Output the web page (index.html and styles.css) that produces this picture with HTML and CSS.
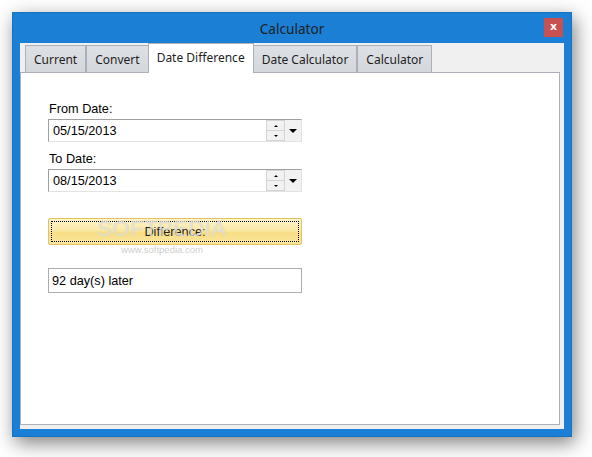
FILE: index.html
```html
<!DOCTYPE html>
<html>
<head>
<meta charset="utf-8">
<title>Calculator</title>
<link rel="stylesheet" href="styles.css">
</head>
<body>
<div class="window">
  <div class="titlebar">
    <span class="title">Calculator</span>
    <button class="close" type="button">x</button>
  </div>
  <div class="client">
    <div class="tabs">
      <div class="tab">Current</div>
      <div class="tab">Convert</div>
      <div class="tab active">Date Difference</div>
      <div class="tab">Date Calculator</div>
      <div class="tab">Calculator</div>
    </div>
    <div class="panel">
      <div class="form">
        <div class="lbl">From Date:</div>
        <div class="date">
          <span class="date-text">05/15/2013</span>
          <span class="spin">
            <span class="spin-btn"><span class="tri-up"></span></span>
            <span class="spin-btn"><span class="tri-down"></span></span>
          </span>
          <span class="drop"><span class="tri-drop"></span></span>
        </div>
        <div class="lbl lbl-gap">To Date:</div>
        <div class="date">
          <span class="date-text">08/15/2013</span>
          <span class="spin">
            <span class="spin-btn"><span class="tri-up"></span></span>
            <span class="spin-btn"><span class="tri-down"></span></span>
          </span>
          <span class="drop"><span class="tri-drop"></span></span>
        </div>
        <button class="diff-btn" type="button"><span class="focus">Difference:</span></button>
        <div class="result">92 day(s) later</div>
      </div>
      <div class="watermark">
        <div class="wm-big">SOFTPEDIA</div>
        <div class="wm-small">www.softpedia.com</div>
      </div>
    </div>
  </div>
</div>
</body>
</html>
```
FILE: styles.css
```css
* { box-sizing: border-box; }
html, body { margin: 0; padding: 0; background: #ffffff; }
body { width: 592px; height: 457px; overflow: hidden; padding: 12px 0 0 12px; }

.window {
  width: 560px;
  height: 425px;
  background: #1a7fd5;
  display: flex;
  flex-direction: column;
  box-shadow: 3px 6px 18px rgba(0, 0, 0, 0.5);
  border: 1px solid #1872c0;
}

.titlebar {
  height: 30px;
  display: grid;
  grid-template-columns: 1fr auto 1fr;
  align-items: center;
}
.title {
  grid-column: 2;
  font-family: "Noto Sans", "Open Sans", sans-serif;
  font-size: 13.6px;
  color: #1e1e1e;
  padding-top: 1px;
}
.close {
  grid-column: 3;
  justify-self: end;
  margin-right: 8px;
  margin-bottom: 2px;
  width: 19px;
  height: 19px;
  border: 0;
  padding: 0 0 2px 0;
  background: #c75050;
  color: #ffffff;
  font-family: "DejaVu Sans", sans-serif;
  font-weight: bold;
  font-size: 11px;
  line-height: 17px;
}

.client {
  flex: 1;
  margin: 0 7px 7px 7px;
  background: #f0f0f0;
  display: flex;
  flex-direction: column;
  padding: 0 4px 4px 0;
}

.tabs {
  height: 29px;
  display: flex;
  align-items: flex-end;
  padding-left: 5px;
  position: relative;
  z-index: 2;
}
.tab {
  height: 27px;
  padding: 1px 8px 0 8px;
  border: 1px solid #acb0b8;
  border-bottom: 0;
  background: linear-gradient(#dde0e4, #d4d7dc);
  font-family: "Noto Sans", "Open Sans", sans-serif;
  font-size: 12px;
  color: #1e1e1e;
  display: flex;
  align-items: center;
}
.tab.active {
  height: 30px;
  margin-bottom: -1px;
  background: #ffffff;
  padding: 0 8px 2px 8px;
  margin-left: -1px;
  margin-right: -1px;
}

.panel {
  flex: 1;
  background: #ffffff;
  border: 1px solid #acb0b8;
  position: relative;
  padding: 28px 0 0 27px;
}

.form {
  width: 254px;
  display: flex;
  flex-direction: column;
  font-family: "Liberation Sans", Arial, sans-serif;
  font-size: 12.7px;
  color: #000000;
}
.lbl {
  line-height: 16px;
  padding-left: 1px;
  margin-bottom: 2px;
}
.lbl-gap { margin-top: 9px; }

.date {
  height: 23px;
  display: flex;
  align-items: stretch;
  border-top: 1px solid #a0a0a0;
  border-left: 1px solid #a0a0a0;
  border-bottom: 1px solid #e3e3e3;
  border-right: 1px solid #e3e3e3;
  background: #ffffff;
}
.date-text {
  flex: 1;
  padding-left: 4px;
  display: flex;
  align-items: center;
  padding-top: 1px;
}
.spin {
  width: 18px;
  display: flex;
  flex-direction: column;
}
.spin-btn {
  flex: 1;
  background: #f2f2f2;
  border: 1px solid #d4d4d4;
  border-right: 0;
  display: flex;
  align-items: center;
  justify-content: center;
}
.spin-btn + .spin-btn { border-top: 0; }
.tri-up {
  width: 0; height: 0;
  border-left: 2px solid transparent;
  border-right: 2px solid transparent;
  border-bottom: 2px solid #000;
}
.tri-down {
  width: 0; height: 0;
  border-left: 2px solid transparent;
  border-right: 2px solid transparent;
  border-top: 2px solid #000;
}
.drop {
  width: 17px;
  background: #f2f2f2;
  border-left: 1px solid #d4d4d4;
  display: flex;
  align-items: center;
  justify-content: center;
}
.tri-drop {
  width: 0; height: 0;
  border-left: 4px solid transparent;
  border-right: 4px solid transparent;
  border-top: 4px solid #000;
}

.diff-btn {
  margin-top: 26px;
  height: 27px;
  padding: 2px;
  border: 1px solid #e5c262;
  border-radius: 2px;
  background: linear-gradient(#fdf4cc 0%, #fae9a6 45%, #f8df86 55%, #f9e49c 100%);
  font-family: "Liberation Sans", Arial, sans-serif;
  font-size: 12.7px;
  color: #1e1e1e;
  display: flex;
}
.focus {
  flex: 1;
  border: 1px dotted #000;
  display: flex;
  align-items: center;
  justify-content: center;
}

.result {
  margin-top: 23px;
  height: 25px;
  border: 1px solid #abadb3;
  padding-left: 3px;
  display: flex;
  align-items: center;
  padding-top: 1px;
}

.watermark {
  position: absolute;
  left: 71px;
  top: 142px;
  width: 140px;
  text-align: center;
  pointer-events: none;
  font-family: "Liberation Sans", Arial, sans-serif;
}
.wm-big {
  font-size: 22px;
  letter-spacing: 0.5px;
  color: rgba(255, 255, 255, 0.55);
  text-shadow: 0 0 1px rgba(150, 150, 150, 0.55);
  line-height: 28px;
}
.wm-small {
  font-size: 9.5px;
  color: rgba(170, 170, 170, 0.6);
  line-height: 12px;
  margin-top: 1px;
}
```
